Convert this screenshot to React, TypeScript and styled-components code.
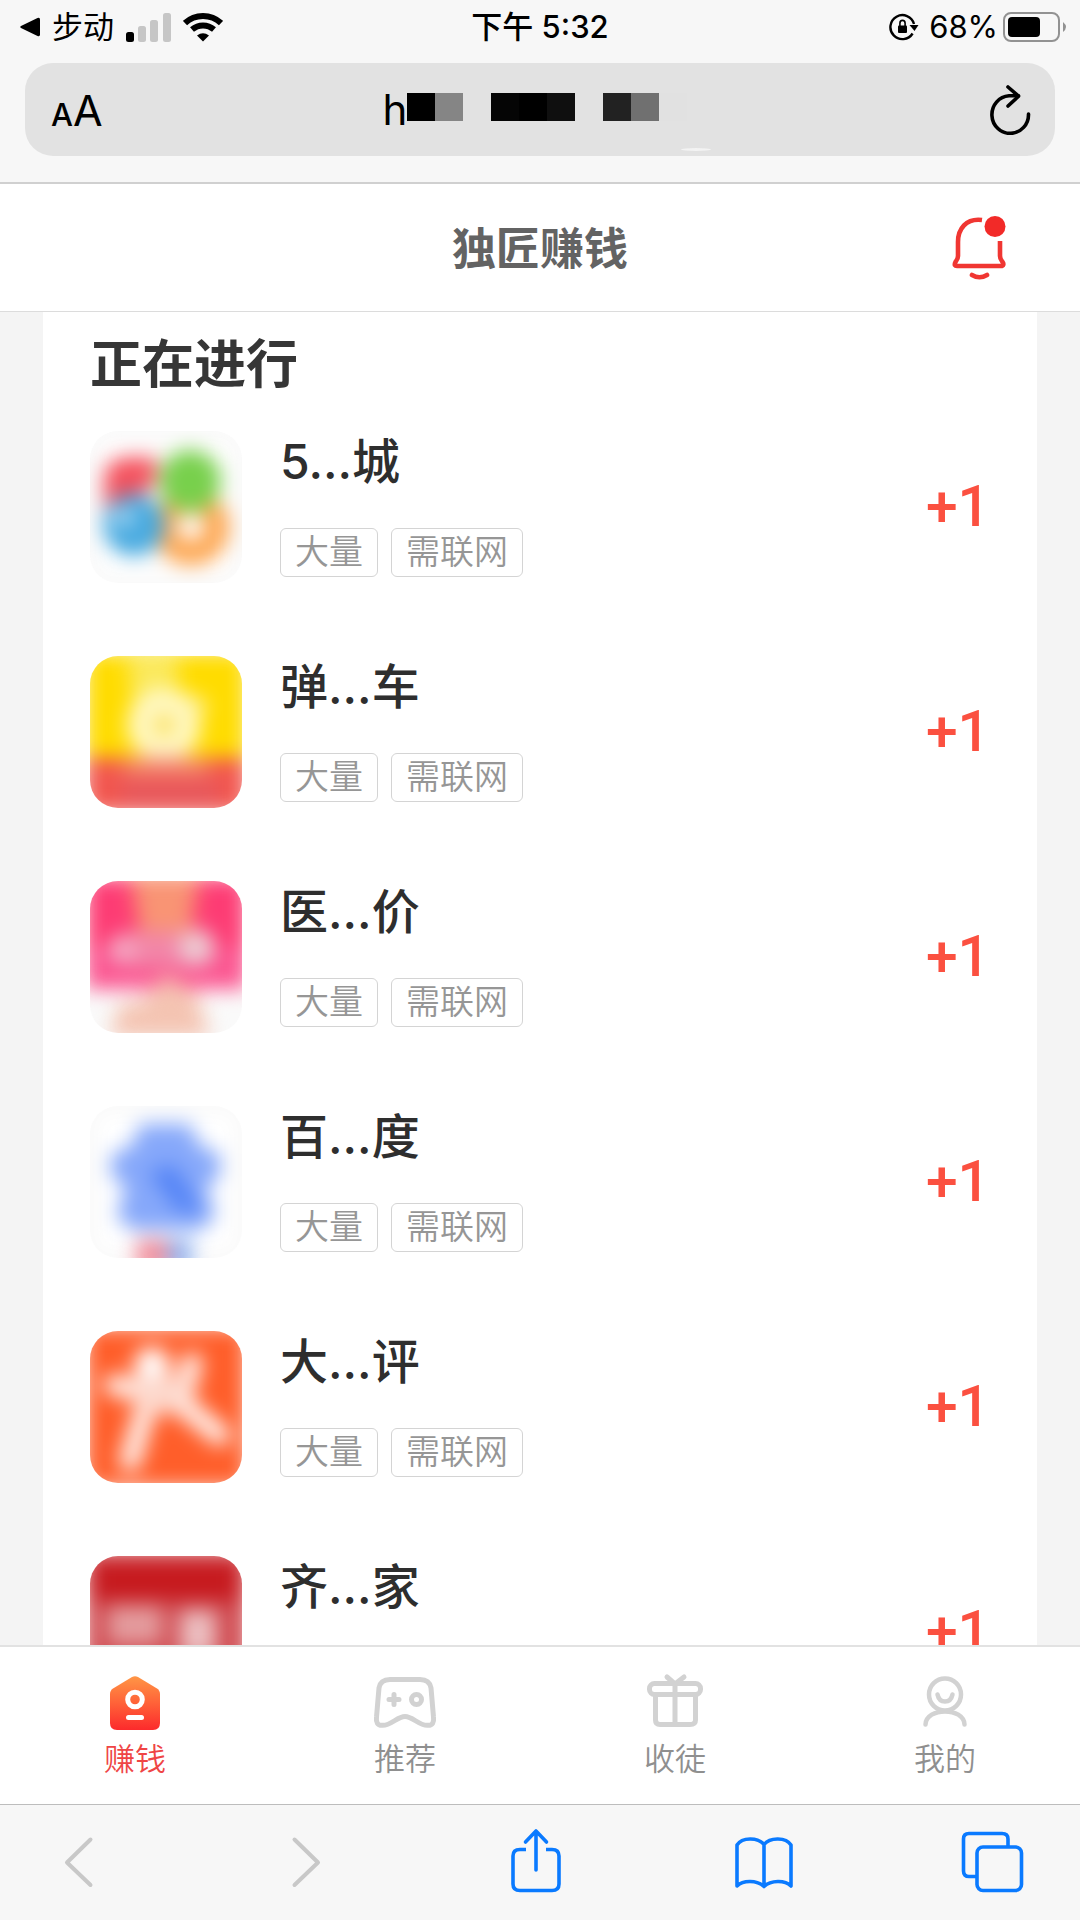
import React from "react";
import styled, { createGlobalStyle } from "styled-components";

const GlobalStyle = createGlobalStyle`
  *, *::before, *::after { box-sizing: border-box; }
  body {
    margin: 0;
    background: #f4f4f4;
    font-family: Inter, "Noto Sans CJK SC", sans-serif;
    color: #333;
  }
  button {
    margin: 0;
    padding: 0;
    border: 0;
    background: none;
    font: inherit;
    color: inherit;
    cursor: pointer;
  }
  h1, h2, h3, p, ul { margin: 0; padding: 0; font-weight: inherit; }
  ul { list-style: none; }
  svg { display: block; }
`;

const Screen = styled.div`
  display: flex;
  flex-direction: column;
  height: 100vh;
`;

/* ---------- browser chrome, top ---------- */

const BrowserTop = styled.header`
  flex: none;
  background: #f7f7f7;
  border-bottom: 2px solid #d0d0d0;
  padding-bottom: 26px;
  color: #000;
`;

const StatusBar = styled.div`
  display: grid;
  grid-template-columns: 1fr auto 1fr;
  align-items: center;
  height: 63px;
  padding: 0 13px 9px;
  font-size: 31px;
  line-height: 40px;
`;

const StatusGroup = styled.div<{ $end?: boolean }>`
  display: flex;
  align-items: center;
  justify-content: ${(p) => (p.$end ? "flex-end" : "flex-start")};
  gap: ${(p) => (p.$end ? 5 : 12)}px;
`;

const BackToApp = styled.button`
  display: flex;
  align-items: center;
  gap: 12px;
  margin-left: 7px;
  line-height: 40px;
`;

const Clock = styled.time`
  font-size: 31px;
  font-weight: 500;
`;

const Charge = styled.span`
  margin-left: 5px;
`;

const AddressBar = styled.div`
  position: relative;
  display: flex;
  align-items: center;
  height: 93px;
  margin: 0 25px;
  padding: 0 24px 0 26px;
  border-radius: 28px;
  background: #e2e2e2;
`;

const TextSize = styled.button`
  display: flex;
  align-items: baseline;
  padding-top: 5px;
  font-size: 43px;
  line-height: 48px;
`;

const SmallLetter = styled.span`
  font-size: 31px;
  font-weight: 500;
`;

const Address = styled.button`
  flex: 1;
  display: flex;
  align-items: center;
  justify-content: center;
  padding-right: 22px;
  font-size: 42px;
  line-height: 48px;
`;

const Mosaic = styled.span`
  display: flex;
  height: 28px;
  margin-bottom: 6px;
`;

const Cell = styled.span<{ $tone: string }>`
  width: 28px;
  background: ${(p) => p.$tone};
`;

const Glint = styled.span`
  position: absolute;
  left: 656px;
  bottom: 5px;
  width: 30px;
  height: 3px;
  border-radius: 50%;
  background: #f3f3f3;
`;

/* ---------- page ---------- */

const PageHeader = styled.div`
  flex: none;
  display: grid;
  grid-template-columns: 1fr auto 1fr;
  align-items: center;
  height: 128px;
  padding: 0 74px;
  border-bottom: 1px solid #dcdcdc;
  background: #fff;
`;

const PageTitle = styled.h1`
  grid-column: 2;
  padding-top: 3px;
  font-size: 44px;
  line-height: 60px;
  font-weight: 700;
  color: #636363;
`;

const BellButton = styled.button`
  justify-self: end;
`;

const Content = styled.main`
  flex: 1;
  min-height: 0;
  overflow-y: auto;
  scrollbar-width: none;
  padding: 0 43px;
  background: #f4f4f4;
`;

const Card = styled.section`
  padding: 19px 47px 0;
  background: #fff;
`;

const SectionTitle = styled.h2`
  font-size: 52px;
  line-height: 68px;
  font-weight: 700;
  color: #363636;
  margin-bottom: 32px;
`;

const TaskRow = styled.li`
  display: flex;
  align-items: flex-start;
  height: 225px;
`;

const AppIcon = styled.div`
  flex: none;
  width: 152px;
  height: 152px;
  border-radius: 28px;
  overflow: hidden;
  background: #fafafa;
`;

const TaskBody = styled.div`
  flex: 1;
  margin-left: 38px;
`;

const TaskName = styled.h3`
  margin-bottom: 35px;
  font-size: 48px;
  line-height: 62px;
  font-weight: 500;
  color: #2e2e2e;
`;

const Tags = styled.div`
  display: flex;
  gap: 13px;
`;

const Tag = styled.span`
  height: 49px;
  padding: 0 14px;
  border: 1px solid #d4d4d4;
  border-radius: 6px;
  font-size: 34px;
  line-height: 46px;
  font-weight: 350;
  color: #969696;
`;

const Reward = styled.div`
  font-family: Roboto, sans-serif;
  font-size: 57px;
  line-height: 152px;
  font-weight: 500;
  color: #fb5040;
`;

const TabBar = styled.nav`
  flex: none;
  display: grid;
  grid-template-columns: repeat(4, 1fr);
  height: 159px;
  border-top: 2px solid #e2e2e2;
  background: #fff;
`;

const Tab = styled.button<{ $active?: boolean }>`
  display: flex;
  flex-direction: column;
  align-items: center;
  padding-top: 26px;
  gap: 4px;
  font-size: 31px;
  line-height: 44px;
  font-weight: 350;
  color: ${(p) => (p.$active ? "#ef4545" : "#8f8f8f")};
`;

/* ---------- browser chrome, bottom ---------- */

const BrowserTools = styled.footer`
  flex: none;
  display: flex;
  justify-content: space-between;
  align-items: flex-start;
  height: 116px;
  padding: 21px 56px 0 47px;
  border-top: 1px solid #bdbdbd;
  background: #f7f7f7;
`;

/* ---------- icons ---------- */

const Signal = () => (
  <svg width="45" height="30" viewBox="0 0 45 30">
    <rect x="0" y="20" width="8" height="10" rx="2.5" />
    <rect x="12" y="14" width="8" height="16" rx="2.5" fill="#c6c6c6" />
    <rect x="24" y="8" width="8" height="22" rx="2.5" fill="#c6c6c6" />
    <rect x="37" y="1" width="8" height="29" rx="2.5" fill="#c6c6c6" />
  </svg>
);

const Wifi = () => (
  <svg width="40" height="30" viewBox="0 0 40 30" fill="none" stroke="#000">
    <path d="M2 11 C12 1.5 28 1.5 38 11" strokeWidth="6" />
    <path d="M9 17.5 C15.5 12 24.5 12 31 17.5" strokeWidth="6" />
    <path d="M14 23.5 Q20 19 26 23.5 L20 29.5 Z" fill="#000" stroke="none" />
  </svg>
);

const RotationLock = () => (
  <svg width="30" height="28" viewBox="0 0 30 28">
    <path d="M23.6 20.500 A12 12 0 1 1 25 11" fill="none" stroke="#000" strokeWidth="2.4" />
    <path d="M20.500 12 h9 l-4 6 z" />
    <rect x="9" y="12.4" width="9" height="7.6" rx="1" />
    <path d="M10.900 13 v-2.800 a2.6 2.8 0 0 1 5.2 0 V13" fill="none" stroke="#000" strokeWidth="1.6" />
  </svg>
);

const Battery = () => (
  <svg width="64" height="30" viewBox="0 0 64 30">
    <rect x="1" y="1" width="55" height="28" rx="7" fill="none" stroke="#929292" strokeWidth="2" />
    <rect x="5" y="5" width="32" height="20" rx="4" />
    <path d="M60 10 q6 5 0 10 z" fill="#929292" />
  </svg>
);

const Reload = () => (
  <svg width="42" height="50" viewBox="0 0 42 50" fill="none" stroke="#000" strokeWidth="3.6" strokeLinecap="round" strokeLinejoin="round">
    <path d="M39.500 29 A18.3 18.8 0 1 1 20 10.8 H29.500" />
    <path d="M19 2 L29.500 11.2 L19 21" />
  </svg>
);

const Bell = () => (
  <svg width="54" height="64" viewBox="0 0 54 64" fill="none" stroke="#f03632" strokeWidth="4.6" strokeLinecap="round" strokeLinejoin="round">
    <path d="M30 4 C14 2 6 13 6 26 V40 C6 43 5 44 3.500 46 C2 49 3 50 5 50 H49 C51.500 50 52 48 50.500 46 C49 44 48 43 48 40 V25" strokeLinecap="butt" />
    <path d="M20 59 Q27.500 63.500 35 59" />
    <circle cx="43" cy="10.500" r="10.500" fill="#f22a28" stroke="none" />
  </svg>
);

const HomeIcon = () => (
  <svg width="64" height="60" viewBox="0 0 64 60">
    <defs>
      <linearGradient id="home" x1="0" y1="0" x2="0" y2="1">
        <stop offset="0" stopColor="#ff9646" />
        <stop offset="0.5" stopColor="#ff6238" />
        <stop offset="1" stopColor="#fc2a2c" />
      </linearGradient>
    </defs>
    <path d="M29 4 Q32 2.500 35 4 L54 15.500 Q57 17.500 57 21 V50 Q57 57 50 57 H14 Q7 57 7 50 V21 Q7 17.500 10 15.500 Z" fill="url(#home)" />
    <circle cx="32" cy="26.500" r="7.300" fill="none" stroke="#fff" strokeWidth="5" />
    <path d="M25.500 44.500 H38.500" stroke="#fff" strokeWidth="5" strokeLinecap="round" />
  </svg>
);

const GamepadIcon = () => (
  <svg width="64" height="60" viewBox="0 0 64 60" fill="none" stroke="#d2d2d2" strokeWidth="5" strokeLinecap="round" strokeLinejoin="round">
    <path d="M17 6.500 H47 Q56.500 6.500 58 15 L60.500 44 Q61.500 52.500 55 52.300 C46 53 40 43.500 32 43.500 C24 43.500 18 53 9 52.300 Q2.500 52.500 3.500 44 L6 15 Q7.500 6.500 17 6.500 Z" />
    <path d="M21 21.500 V31.500 M16 26.500 H26" />
    <circle cx="43.500" cy="26.500" r="5" />
  </svg>
);

const GiftIcon = () => (
  <svg width="64" height="60" viewBox="0 0 64 60" fill="none" stroke="#d2d2d2" strokeWidth="5" strokeLinecap="round" strokeLinejoin="round">
    <rect x="6.500" y="10.500" width="51" height="11" rx="5" />
    <path d="M12.500 22 V47 Q12.500 51.500 17 51.500 H47 Q52.500 51.500 52.500 47 V22 M32 11 V51 M24 4 L32 11 L41 4" />
  </svg>
);

const PersonIcon = () => (
  <svg width="64" height="60" viewBox="0 0 64 60" fill="none" stroke="#d2d2d2" strokeWidth="4.500" strokeLinecap="round" strokeLinejoin="round">
    <circle cx="32" cy="21.500" r="16" />
    <path d="M24.500 21.500 Q26 28.500 32 28.500 Q38 28.500 39.500 21.500" />
    <path d="M12.500 51.500 C13 34 51 34 51.500 51.500" />
  </svg>
);

const TOOL = { width: 64, height: 68, viewBox: "0 0 64 68", fill: "none", strokeWidth: 3.6, strokeLinecap: "round", strokeLinejoin: "round" } as const;

const Back = () => (
  <svg {...TOOL} stroke="#c8c8c8" strokeWidth="4"><path d="M43.500 13.500 L20 36.500 L43.500 59" /></svg>
);
const Forward = () => (
  <svg {...TOOL} stroke="#c8c8c8" strokeWidth="4"><path d="M19.500 13.500 L43 36.500 L19.500 59" /></svg>
);
const Share = () => (
  <svg {...TOOL} stroke="#0a7aff">
    <path d="M22 23.500 H16 Q9 23.500 9 30 V58 Q9 64.500 16 64.500 H48 Q55 64.500 55 58 V30 Q55 23.500 48 23.500 H42" strokeLinecap="butt" />
    <path d="M32 44 V5 M21.500 16 L32 5 L42.500 16" />
  </svg>
);
const Book = () => (
  <svg {...TOOL} stroke="#0a7aff">
    <path d="M32 18.500 C26 11 10 11 5 19 V60 C11 54 25 54 32 60.500 C39 54 53 54 59 60 V19 C54 11 38 11 32 18.500 V60" />
  </svg>
);
const Windows = () => (
  <svg {...TOOL} stroke="#0a7aff">
    <path d="M16 50.500 H9 Q3.500 50.500 3.500 45 V13 Q3.500 7.500 9 7.500 H42 Q48 7.500 48 13 V20" />
    <rect x="17" y="21" width="44.500" height="43.500" rx="6" />
  </svg>
);

/* Frosted app artwork: every drawing is softened and cropped by its tile */
const Art = ({ id, children }: { id: string; children: React.ReactNode }) => (
  <AppIcon>
    <svg width="152" height="152" viewBox="0 0 152 152" aria-hidden="true">
      <filter id={id} x="-20%" y="-20%" width="140%" height="140%" filterUnits="objectBoundingBox" colorInterpolationFilters="sRGB">
        <feGaussianBlur stdDeviation="10" />
      </filter>
      <g filter={`url(#${id})`}>{children}</g>
    </svg>
  </AppIcon>
);

const Clover = () => (
  <Art id="clover">
    <rect x="10" y="10" width="132" height="132" fill="#fff" />
    <path d="M14 76 V44 Q18 26 40 26 H66 V50 L44 74 Z" fill="#f4525e" />
    <circle cx="101" cy="96" r="26" fill="none" stroke="#fda650" strokeWidth="25" />
    <circle cx="44" cy="94" r="31" fill="#48aae0" />
    <circle cx="34" cy="86" r="9" fill="#c6e4f8" />
    <circle cx="100" cy="50" r="31" fill="#78d04c" />
  </Art>
);

const Bicycle = () => (
  <Art id="bicycle">
    <rect x="-4" y="-4" width="160" height="160" fill="#ffdc00" />
    <path d="M36 -8 H88 V40 L72 60 H44 Z" fill="#fbe95c" />
    <circle cx="74" cy="69" r="24" fill="#fbe060" stroke="#fff8c4" strokeWidth="26" />
    <path d="M98 36 L122 50 L100 62 Z" fill="#fdf0a0" />
    <rect x="-4" y="102" width="160" height="55" fill="#f2564e" />
    <rect x="34" y="104" width="84" height="14" fill="#f29078" />
    <rect x="30" y="128" width="100" height="18" fill="#e45860" />
  </Art>
);

const Clinic = () => (
  <Art id="clinic">
    <rect x="-4" y="-4" width="160" height="110" fill="#fd3c74" />
    <rect x="-4" y="66" width="160" height="42" fill="#fb5590" />
    <path d="M40 -6 H110 L100 50 H50 Z" fill="#f99474" />
    <rect x="28" y="50" width="96" height="36" rx="18" fill="#f286a8" />
    <circle cx="107" cy="66" r="18" fill="#ecccd4" />
    <circle cx="32" cy="68" r="14" fill="#f4acc6" />
    <path d="M20 156 L30 122 H50 L76 94 L106 112 L120 156 Z" fill="#f4c4b2" />
  </Art>
);

const Paw = () => (
  <Art id="paw">
    <rect x="8" y="8" width="136" height="136" fill="#fff" />
    <path d="M50 18 H100 L110 40 L130 48 V70 L116 82 L126 108 L112 124 H42 L26 110 L36 82 L20 68 L22 48 L42 40 Z" fill="#86a8fa" />
    <path d="M58 66 L84 58 L114 106 H88 Z" fill="#5484f6" />
    <rect x="46" y="134" width="32" height="30" fill="#f08c9a" />
    <rect x="78" y="134" width="24" height="30" fill="#8eb0ee" />
  </Art>
);

const Runner = () => (
  <Art id="runner">
    <rect x="-4" y="-4" width="160" height="160" fill="#ff5e2a" />
    <circle cx="62" cy="34" r="18" fill="#fff" />
    <path d="M24 54 L52 60 M102 32 L92 68 M56 76 L40 130 M60 72 H90 L130 104" fill="none" stroke="#fff4f0" strokeWidth="21" strokeLinecap="round" strokeLinejoin="round" />
    <path d="M44 46 H100 L92 80 L52 82 Z" fill="#fdd8cc" />
  </Art>
);

const Decor = () => (
  <Art id="decor">
    <rect x="-4" y="-4" width="160" height="160" fill="#cb2a30" />
    <rect x="-4" y="46" width="160" height="110" fill="#d04a50" />
    <rect x="8" y="12" width="136" height="28" fill="#c6181c" />
    <rect x="18" y="50" width="54" height="38" fill="#e49c9e" />
    <rect x="90" y="54" width="36" height="48" fill="#ecc0c2" />
  </Art>
);

const TASKS = [
  { name: "5...城", Icon: Clover },
  { name: "弹...车", Icon: Bicycle },
  { name: "医...价", Icon: Clinic },
  { name: "百...度", Icon: Paw },
  { name: "大...评", Icon: Runner },
  { name: "齐...家", Icon: Decor },
];

const TABS = [
  { label: "赚钱", Icon: HomeIcon, active: true },
  { label: "推荐", Icon: GamepadIcon },
  { label: "收徒", Icon: GiftIcon },
  { label: "我的", Icon: PersonIcon },
];

const TOOLS = [
  { label: "后退", Icon: Back },
  { label: "前进", Icon: Forward },
  { label: "分享", Icon: Share },
  { label: "书签", Icon: Book },
  { label: "标签页", Icon: Windows },
];

const MOSAIC = ["#000", "#858585", "transparent", "#050505", "#000", "#0f0f0f", "transparent", "#222", "#707070", "#e1e1e1"];

export default function App() {
  return (
    <Screen>
      <GlobalStyle />
      <BrowserTop>
        <StatusBar>
          <StatusGroup>
            <BackToApp>
              <svg width="20" height="20" viewBox="0 0 20 20"><path d="M1 9 L17.500 1 Q20 0 20 2.500 V17.500 Q20 20 17.500 19 L1 11 Q-0.500 10 1 9 Z" /></svg>
              步动
            </BackToApp>
            <Signal />
            <Wifi />
          </StatusGroup>
          <Clock>下午 5:32</Clock>
          <StatusGroup $end>
            <RotationLock />
            <Charge>68%</Charge>
            <Battery />
          </StatusGroup>
        </StatusBar>
        <AddressBar>
          <TextSize aria-label="文字大小"><SmallLetter>A</SmallLetter>A</TextSize>
          <Address aria-label="地址">
            h
            <Mosaic>{MOSAIC.map((tone, i) => <Cell key={i} $tone={tone} />)}</Mosaic>
          </Address>
          <button aria-label="重新载入"><Reload /></button>
          <Glint />
        </AddressBar>
      </BrowserTop>

      <PageHeader>
        <PageTitle>独匠赚钱</PageTitle>
        <BellButton aria-label="消息"><Bell /></BellButton>
      </PageHeader>

      <Content>
        <Card>
          <SectionTitle>正在进行</SectionTitle>
          <ul>
            {TASKS.map(({ name, Icon }) => (
              <TaskRow key={name}>
                <Icon />
                <TaskBody>
                  <TaskName>{name}</TaskName>
                  <Tags>
                    <Tag>大量</Tag>
                    <Tag>需联网</Tag>
                  </Tags>
                </TaskBody>
                <Reward>+1</Reward>
              </TaskRow>
            ))}
          </ul>
        </Card>
      </Content>

      <TabBar>
        {TABS.map(({ label, Icon, active }) => (
          <Tab key={label} $active={active}>
            <Icon />
            {label}
          </Tab>
        ))}
      </TabBar>

      <BrowserTools>
        {TOOLS.map(({ label, Icon }) => (
          <button key={label} aria-label={label}><Icon /></button>
        ))}
      </BrowserTools>
    </Screen>
  );
}
